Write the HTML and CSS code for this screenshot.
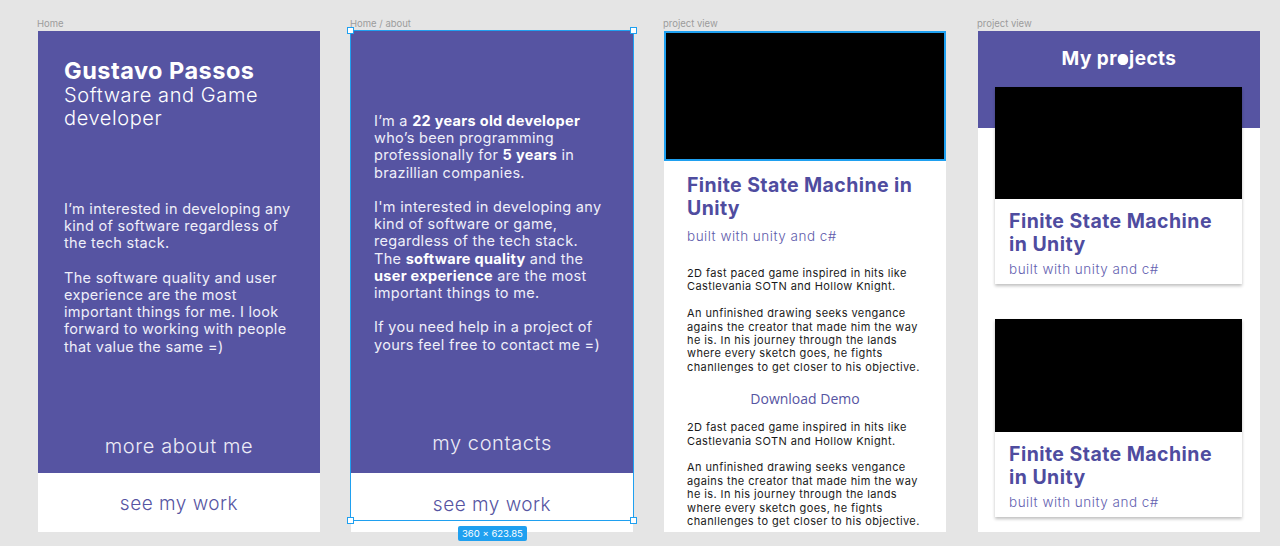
FILE: index.html
```html
<!DOCTYPE html>
<html>
<head>
<meta charset="utf-8">
<link rel="stylesheet" href="styles.css">
</head>
<body>
<div class="canvas">
  <section class="col">
    <div class="label">Home</div>
    <div class="frame">
      <div class="purple home">
        <h1 class="name">Gustavo Passos</h1>
        <div class="role">Software and Game<br>developer</div>
        <p class="text home-text">I’m interested in developing any<br>kind of software regardless of<br>the tech stack.<br><br>The software quality and user<br>experience are the most<br>important things for me. I look<br>forward to working with people<br>that value the same =)</p>
        <div class="link light">more about me</div>
      </div>
      <div class="white-foot"><div class="link dark">see my work</div></div>
    </div>
  </section>

  <section class="col">
    <div class="label">Home / about</div>
    <div class="frame selected-wrap">
      <div class="purple about">
        <p class="text about-text">I’m a <b>22 years old developer</b><br>who’s been programming<br>professionally for <b>5 years</b> in<br>brazillian companies.<br><br>I'm interested in developing any<br>kind of software or game,<br>regardless of the tech stack.<br>The <b>software quality</b> and the<br><b>user experience</b> are the most<br>important things to me.<br><br>If you need help in a project of<br>yours feel free to contact me =)</p>
        <div class="link light contacts">my contacts</div>
      </div>
      <div class="white-foot"><div class="link dark foot2">see my work</div></div>
      <div class="selection">
        <span class="handle tl"></span><span class="handle tr"></span>
        <span class="handle bl"></span><span class="handle br"></span>
        <span class="badge">360 × 623.85</span>
      </div>
    </div>
  </section>

  <section class="col">
    <div class="label">project view</div>
    <div class="frame project">
      <div class="hero"></div>
      <div class="project-body">
        <h2 class="ptitle">Finite State Machine in<br>Unity</h2>
        <div class="psub">built with unity and c#</div>
        <p class="desc">2D fast paced game inspired in hits like<br>Castlevania SOTN and Hollow Knight.<br><br>An unfinished drawing seeks vengance<br>agains the creator that made him the way<br>he is. In his journey through the lands<br>where every sketch goes, he fights<br>chanllenges to get closer to his objective.</p>
        <div class="download">Download Demo</div>
        <p class="desc desc2">2D fast paced game inspired in hits like<br>Castlevania SOTN and Hollow Knight.<br><br>An unfinished drawing seeks vengance<br>agains the creator that made him the way<br>he is. In his journey through the lands<br>where every sketch goes, he fights<br>chanllenges to get closer to his objective.</p>
      </div>
    </div>
  </section>

  <section class="col last">
    <div class="label">project view</div>
    <div class="frame projects">
      <h2 class="ptitle-head">My pr<span class="cursor-o">o<span class="dot"></span></span>jects</h2>
      <div class="card">
        <div class="thumb"></div>
        <div class="card-body">
          <div class="ctitle">Finite State Machine<br>in Unity</div>
          <div class="csub">built with unity and c#</div>
        </div>
      </div>
      <div class="card card2">
        <div class="thumb thumb2"></div>
        <div class="card-body">
          <div class="ctitle">Finite State Machine<br>in Unity</div>
          <div class="csub">built with unity and c#</div>
        </div>
      </div>
    </div>
  </section>
</div>
</body>
</html>
```

FILE: styles.css
```css
* { box-sizing: border-box; }
html, body { margin: 0; padding: 0; }
body {
  background: #e5e5e5;
  width: 1280px;
  height: 546px;
  overflow: hidden;
  font-family: Inter, "Open Sans", "DejaVu Sans", sans-serif;
}
.canvas {
  display: flex;
  gap: 31px;
  padding-left: 38px;
  padding-top: 16px;
}
.col { width: 282px; display: flex; flex-direction: column; }
.col.last { margin-left: 1px; }
.label {
  font-family: Inter, "Liberation Sans", sans-serif;
  font-size: 9.5px;
  line-height: 15px;
  color: #9c9c9c;
  margin-left: -1px;
}
.frame {
  width: 282px;
  height: 501px;
  background: #fff;
  display: flex;
  flex-direction: column;
  position: relative;
}
.frame > * { flex-shrink: 0; }
.project { overflow: hidden; }
.purple {
  background: #5654a2;
  height: 442px;
  display: flex;
  flex-direction: column;
  color: #fff;
}
.home { padding: 27px 26px 15px; }
.about { padding: 0 23px 18px; }
.name {
  margin: 0;
  font-size: 23.5px;
  line-height: 26px;
  font-weight: 700;
  letter-spacing: 0.5px;
}
.role {
  font-size: 20px;
  line-height: 23px;
  font-weight: 300;
  letter-spacing: 0.6px;
}
.text {
  margin: 0;
  font-size: 14.5px;
  line-height: 17.2px;
  font-weight: 400;
  letter-spacing: 0.3px;
  color: #efeff9;
}
.text b { font-weight: 700; color: #fff; }
.home-text { margin-top: 70px; }
.about-text { margin-top: 81px; }
.link {
  font-size: 19px;
  line-height: 24px;
  text-align: center;
  font-weight: 300;
  letter-spacing: 0.5px;
}
.light { margin-top: auto; color: #ecebf6; font-size: 20px; letter-spacing: 0.6px; }
.dark { color: #5654a2; }
.white-foot {
  flex: 1;
  padding-top: 19px;
}
.foot2 { margin-top: 1px; }

.selection {
  position: absolute;
  left: -1px;
  top: -1px;
  width: 284px;
  height: 491px;
  border: 1px solid #1fa0f0;
  pointer-events: none;
}
.handle {
  position: absolute;
  width: 7px;
  height: 7px;
  background: #fff;
  border: 1px solid #1fa0f0;
}
.handle.tl { left: -4px; top: -4px; }
.handle.tr { right: -4px; top: -4px; }
.handle.bl { left: -4px; bottom: -4px; }
.handle.br { right: -4px; bottom: -4px; }
.badge {
  position: absolute;
  left: 107px;
  top: 495px;
  height: 15px;
  padding: 0 4px;
  border-radius: 2px;
  background: #1fa0f0;
  color: #fff;
  font-family: Inter, "Liberation Sans", sans-serif;
  font-size: 9.5px;
  line-height: 15px;
  white-space: nowrap;
}

.hero {
  height: 130px;
  background: #000;
  border: 2px solid #1fa0f0;
}
.project-body { padding: 13px 23px 0; }
.ptitle {
  margin: 0;
  font-size: 19.5px;
  line-height: 23px;
  font-weight: 700;
  letter-spacing: 0.4px;
  color: #4f4c9f;
}
.psub {
  margin-top: 7px;
  font-size: 13.5px;
  line-height: 18px;
  font-weight: 300;
  letter-spacing: 0.5px;
  color: #5e5bab;
}
.desc {
  margin: 22px 0 0;
  font-size: 11px;
  line-height: 13.4px;
  letter-spacing: 0.4px;
  color: #1a1a1a;
}
.download {
  margin-top: 16px;
  text-align: center;
  font-family: "Open Sans", "Noto Sans", sans-serif;
  font-size: 14px;
  line-height: 18px;
  color: #5654a2;
}
.desc2 { margin-top: 13px; }

.projects {
  background: linear-gradient(#5654a2 0, #5654a2 97px, #fff 97px);
}
.ptitle-head {
  margin: 16px 0 0;
  text-align: center;
  color: #fff;
  font-size: 19px;
  line-height: 24px;
  font-weight: 700;
  letter-spacing: 0.45px;
}
.cursor-o { position: relative; }
.dot {
  position: absolute;
  left: 1px;
  top: 8px;
  width: 10px;
  height: 10px;
  border-radius: 50%;
  background: #fff;
}
.card {
  margin: 16px 18px 0 17px;
  background: #fff;
  box-shadow: 0 2px 3px rgba(0,0,0,0.25);
}
.card2 { margin-top: 35px; }
.thumb { height: 112px; background: #000; }
.thumb2 { height: 113px; }
.card-body { padding: 11px 14px 6px; }
.ctitle {
  font-size: 19.5px;
  line-height: 23px;
  font-weight: 700;
  letter-spacing: 0.45px;
  color: #4f4c9f;
}
.csub {
  margin-top: 4px;
  font-size: 13.5px;
  line-height: 18px;
  font-weight: 300;
  letter-spacing: 0.5px;
  color: #6461b0;
}
```
